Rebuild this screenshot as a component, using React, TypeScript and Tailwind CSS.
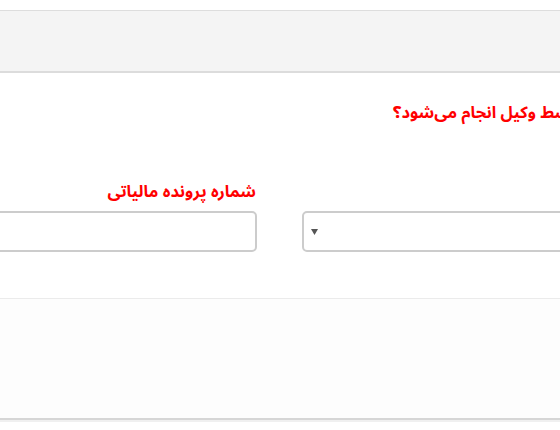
import React from "react";

export default function App() {
  return (
    <div className="w-[560px] h-[430px] overflow-hidden bg-white" style={{ fontFamily: '"Noto Sans Arabic", "Noto Naskh Arabic", "Noto Sans CJK SC", sans-serif' }}>
      <div className="mt-[10px] h-[63px] border-t border-t-[#dddddd] border-b-2 border-b-[#dcdcdc] bg-[#f4f4f4]" />
      <div className="mt-[27px] flex pl-[393px] whitespace-nowrap">
        <span dir="rtl" className="text-[16.5px] leading-[26px] font-bold text-[#ff0000]">
          آیا ثبت نام توسط وکیل انجام می‌شود؟
        </span>
      </div>
      <div className="mt-[53px] flex items-end">
        <div className="flex flex-col w-[256px]">
          <div dir="rtl" className="text-right text-[16.5px] leading-[26px] font-bold text-[#ff0000] whitespace-nowrap">
            شماره پرونده مالیاتی
          </div>
          <div className="mt-[6px] -ml-[10px] w-[267px] h-[41px] border-2 border-[#cccccc] rounded-[5px] bg-white" />
        </div>
        <div className="ml-[46px] w-[300px] h-[41px] border-2 border-[#cccccc] rounded-[5px] bg-white flex items-center pl-[7px] shrink-0">
          <svg width="7" height="6" viewBox="0 0 7 6">
            <polygon points="0,0 7,0 3.5,6" fill="#555555" />
          </svg>
        </div>
      </div>
      <div className="mt-[46px] h-px bg-[#ebebeb]" />
      <div className="h-[119px] bg-[#fdfdfd]" />
      <div className="h-[2px] bg-[#d6d6d6]" />
      <div className="h-[2px] bg-[#f0f0f0]" />
    </div>
  );
}
